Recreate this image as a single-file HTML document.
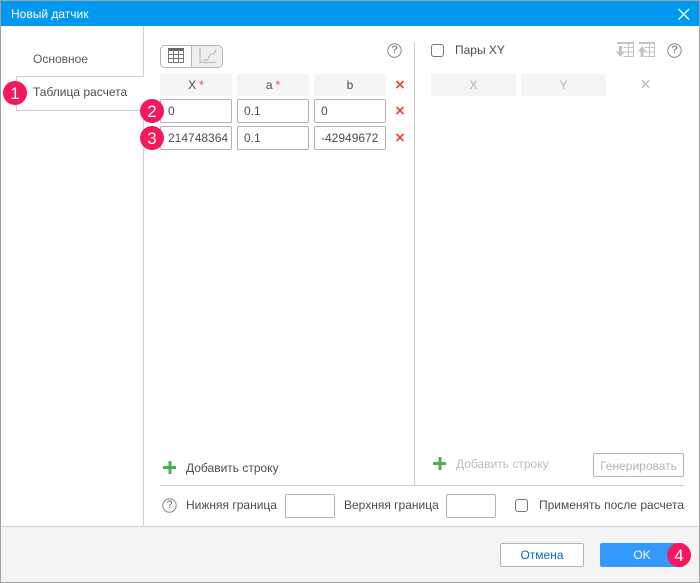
<!DOCTYPE html>
<html><head><meta charset="utf-8">
<style>
html,body{margin:0;padding:0;width:700px;height:583px;overflow:hidden;background:#fff}
body{font-family:"Liberation Sans",sans-serif;font-size:12px;color:#4d4d4d;position:relative}
.a{position:absolute}
.t{position:absolute;white-space:nowrap;line-height:14px}
.l{position:absolute;background:#cfcfcf}
.h{position:absolute;top:74px;height:22px;background:#f5f5f5;text-align:center;line-height:23px;color:#4d4d4d}
.h i{font-style:normal;color:#f44;margin-left:3px}
.in{position:absolute;box-sizing:border-box;height:24px;border:1px solid #b3b3b3;border-radius:2px;background:#fff;line-height:23px;padding-left:6px;color:#4d4d4d;overflow:hidden;white-space:nowrap}
.b{position:absolute;width:24px;height:24px;border-radius:50%;background:#f5185a;color:#fff;font-size:17px;line-height:25px;text-align:center}
.cb{position:absolute;box-sizing:border-box;width:13px;height:13px;border:1px solid #777;border-radius:3px;background:#fff}
.q{position:absolute;width:15px;text-align:center;font-size:11px;line-height:15px;color:#666}
svg{position:absolute;display:block}
</style></head>
<body>
<div class="a" style="left:0;top:0;width:700px;height:583px;box-sizing:border-box;border:1px solid #a0a0a0;z-index:5;pointer-events:none"></div>
<div class="a" style="left:0;top:1px;width:700px;height:25px;background:#0099f0"></div>
<div class="t" style="left:11px;top:7px;color:#fff">Новый датчик</div>
<svg style="left:677px;top:7px" width="14" height="14" viewBox="0 0 14 14"><path d="M1.500 2L12 12.500M12 2L1.500 12.500" stroke="#fff" stroke-width="1.300" fill="none"/></svg>

<div class="l" style="left:143px;top:26px;width:1px;height:51px"></div>
<div class="l" style="left:16px;top:76px;width:128px;height:1px"></div>
<div class="l" style="left:16px;top:76px;width:1px;height:35px"></div>
<div class="l" style="left:16px;top:110px;width:128px;height:1px"></div>
<div class="l" style="left:143px;top:110px;width:1px;height:416px"></div>
<div class="t" style="left:33px;top:52px;color:#595959">Основное</div>
<div class="t" style="left:33px;top:85px">Таблица расчета</div>

<div class="a" style="left:160px;top:45px;width:63px;height:23px;box-sizing:border-box;border:1px solid #b3b3b3;border-radius:5px;overflow:hidden;background:#fff">
<div class="a" style="left:30px;top:0;width:31px;height:21px;background:#efefef;border-left:1px solid #b3b3b3"></div></div>
<svg style="left:168px;top:47px" width="17" height="17" viewBox="0 0 17 17"><rect x="0" y="1" width="16" height="3" fill="#666"/><path d="M.5 3V15.500H15.500V3M.5 7.500H15.500M.5 11.500H15.500M5.500 3V15.500M10.500 3V15.500" stroke="#777" fill="none"/></svg>
<svg style="left:198px;top:47px" width="20" height="17" viewBox="0 0 20 17"><path d="M2 1V15.500H18" stroke="#c8c8c8" stroke-width="1.600" fill="none"/><path d="M5 13H9C11 13 11 7 13 7H16L18 2" stroke="#c8c8c8" stroke-width="1.600" fill="none"/></svg>

<svg style="left:387px;top:43px" width="15" height="15" viewBox="0 0 15 15"><circle cx="7.500" cy="7.500" r="6.700" stroke="#8a8a8a" fill="none"/></svg>
<div class="q" style="left:387px;top:43px">?</div>

<div class="h" style="left:160px;width:72px">X<i>*</i></div>
<div class="h" style="left:237px;width:72px">a<i>*</i></div>
<div class="h" style="left:314px;width:72px">b</div>

<div class="in" style="left:160px;top:99px;width:72px;padding-left:7px">0</div>
<div class="in" style="left:237px;top:99px;width:72px">0.1</div>
<div class="in" style="left:314px;top:99px;width:72px">0</div>
<div class="in" style="left:160px;top:126px;width:72px;padding-left:7px">214748364</div>
<div class="in" style="left:237px;top:126px;width:72px">0.1</div>
<div class="in" style="left:314px;top:126px;width:72px;padding-left:6px">-42949672</div>

<svg style="left:394px;top:79px" width="12" height="12" viewBox="0 0 12 12"><path d="M2.500 2L9.500 9M9.500 2L2.500 9" stroke="#f33f3f" stroke-width="1.700" fill="none"/></svg>
<svg style="left:394px;top:105px" width="12" height="12" viewBox="0 0 12 12"><path d="M2.500 2L9.500 9M9.500 2L2.500 9" stroke="#f33f3f" stroke-width="1.700" fill="none"/></svg>
<svg style="left:394px;top:132px" width="12" height="12" viewBox="0 0 12 12"><path d="M2.500 2L9.500 9M9.500 2L2.500 9" stroke="#f33f3f" stroke-width="1.700" fill="none"/></svg>

<div class="l" style="left:414px;top:42px;width:1px;height:443px"></div>
<div class="cb" style="left:431px;top:44px"></div>
<div class="t" style="left:455px;top:43px">Пары XY</div>
<svg style="left:616px;top:42px" width="19" height="16" viewBox="0 0 19 16"><path d="M1 1H18" stroke="#c2c2c2" stroke-width="2" fill="none"/><path d="M7.500 5.500H17.500V14.500H7.500M7.500 10H17.500M12.500 2V14.500M17.500 2V14.500" stroke="#c2c2c2" fill="none"/><path d="M4.500 4V10" stroke="#c2c2c2" stroke-width="3"/><path d="M0 9.500H9L4.500 15Z" fill="#c2c2c2"/></svg>
<svg style="left:638px;top:42px" width="18" height="16" viewBox="0 0 18 16"><path d="M1 1H17" stroke="#c2c2c2" stroke-width="2" fill="none"/><path d="M6.500 5.500H16.500V14.500H6.500M6.500 10H16.500M11.500 2V14.500M16.500 2V14.500" stroke="#c2c2c2" fill="none"/><path d="M4 9V15" stroke="#c2c2c2" stroke-width="3"/><path d="M0 9.500H8L4 4Z" fill="#c2c2c2"/></svg>
<svg style="left:667px;top:43px" width="15" height="15" viewBox="0 0 15 15"><circle cx="7.500" cy="7.500" r="6.700" stroke="#8a8a8a" fill="none"/></svg>
<div class="q" style="left:667px;top:43px">?</div>

<div class="h" style="left:431px;width:85px;color:#b5b5b5">X</div>
<div class="h" style="left:521px;width:85px;color:#b5b5b5">Y</div>
<svg style="left:640px;top:79px" width="11" height="11" viewBox="0 0 11 11"><path d="M2 1.500L9 8.500M9 1.500L2 8.500" stroke="#c2c2c2" stroke-width="1.700" fill="none"/></svg>

<svg style="left:163px;top:461px" width="14" height="14" viewBox="0 0 14 14"><path d="M7 0V13M0 6.500H13" stroke="#4caf50" stroke-width="3" fill="none"/></svg>
<div class="t" style="left:186px;top:461px">Добавить строку</div>
<svg style="left:433px;top:457px" width="14" height="14" viewBox="0 0 14 14"><path d="M7 0V13M0 6.500H13" stroke="#4caf50" stroke-width="3" fill="none"/></svg>
<div class="t" style="left:456px;top:457px;color:#bdbdbd">Добавить строку</div>
<div class="a" style="left:593px;top:453px;width:91px;height:24px;box-sizing:border-box;border:1px solid #b3b3b3;border-radius:2px;text-align:center;line-height:24px;color:#b5b5b5">Генерировать</div>

<div class="l" style="left:160px;top:485px;width:524px;height:1px"></div>
<svg style="left:162px;top:498px" width="15" height="15" viewBox="0 0 15 15"><circle cx="7.500" cy="7.500" r="6.700" stroke="#8a8a8a" fill="none"/></svg>
<div class="q" style="left:162px;top:498px">?</div>
<div class="t" style="left:186px;top:498px">Нижняя граница</div>
<div class="in" style="left:285px;top:494px;width:50px"></div>
<div class="t" style="left:344px;top:498px">Верхняя граница</div>
<div class="in" style="left:446px;top:494px;width:50px"></div>
<div class="cb" style="left:515px;top:499px"></div>
<div class="t" style="left:539px;top:498px">Применять после расчета</div>

<div class="a" style="left:1px;top:526px;width:698px;height:56px;box-sizing:border-box;background:#f4f4f4;border-top:1px solid #cfcfcf"></div>
<div class="a" style="left:500px;top:543px;width:84px;height:24px;box-sizing:border-box;border:1px solid #b3b3b3;border-radius:2px;background:#fff;text-align:center;line-height:22px;color:#0a6ab5">Отмена</div>
<div class="a" style="left:600px;top:543px;width:84px;height:24px;border-radius:2px;background:#3399ff;color:#fff;text-align:center;line-height:24px">OK</div>

<div class="b" style="left:3px;top:81px">1</div>
<div class="b" style="left:140px;top:99px">2</div>
<div class="b" style="left:140px;top:126px">3</div>
<div class="b" style="left:667px;top:543px">4</div>
</body></html>
